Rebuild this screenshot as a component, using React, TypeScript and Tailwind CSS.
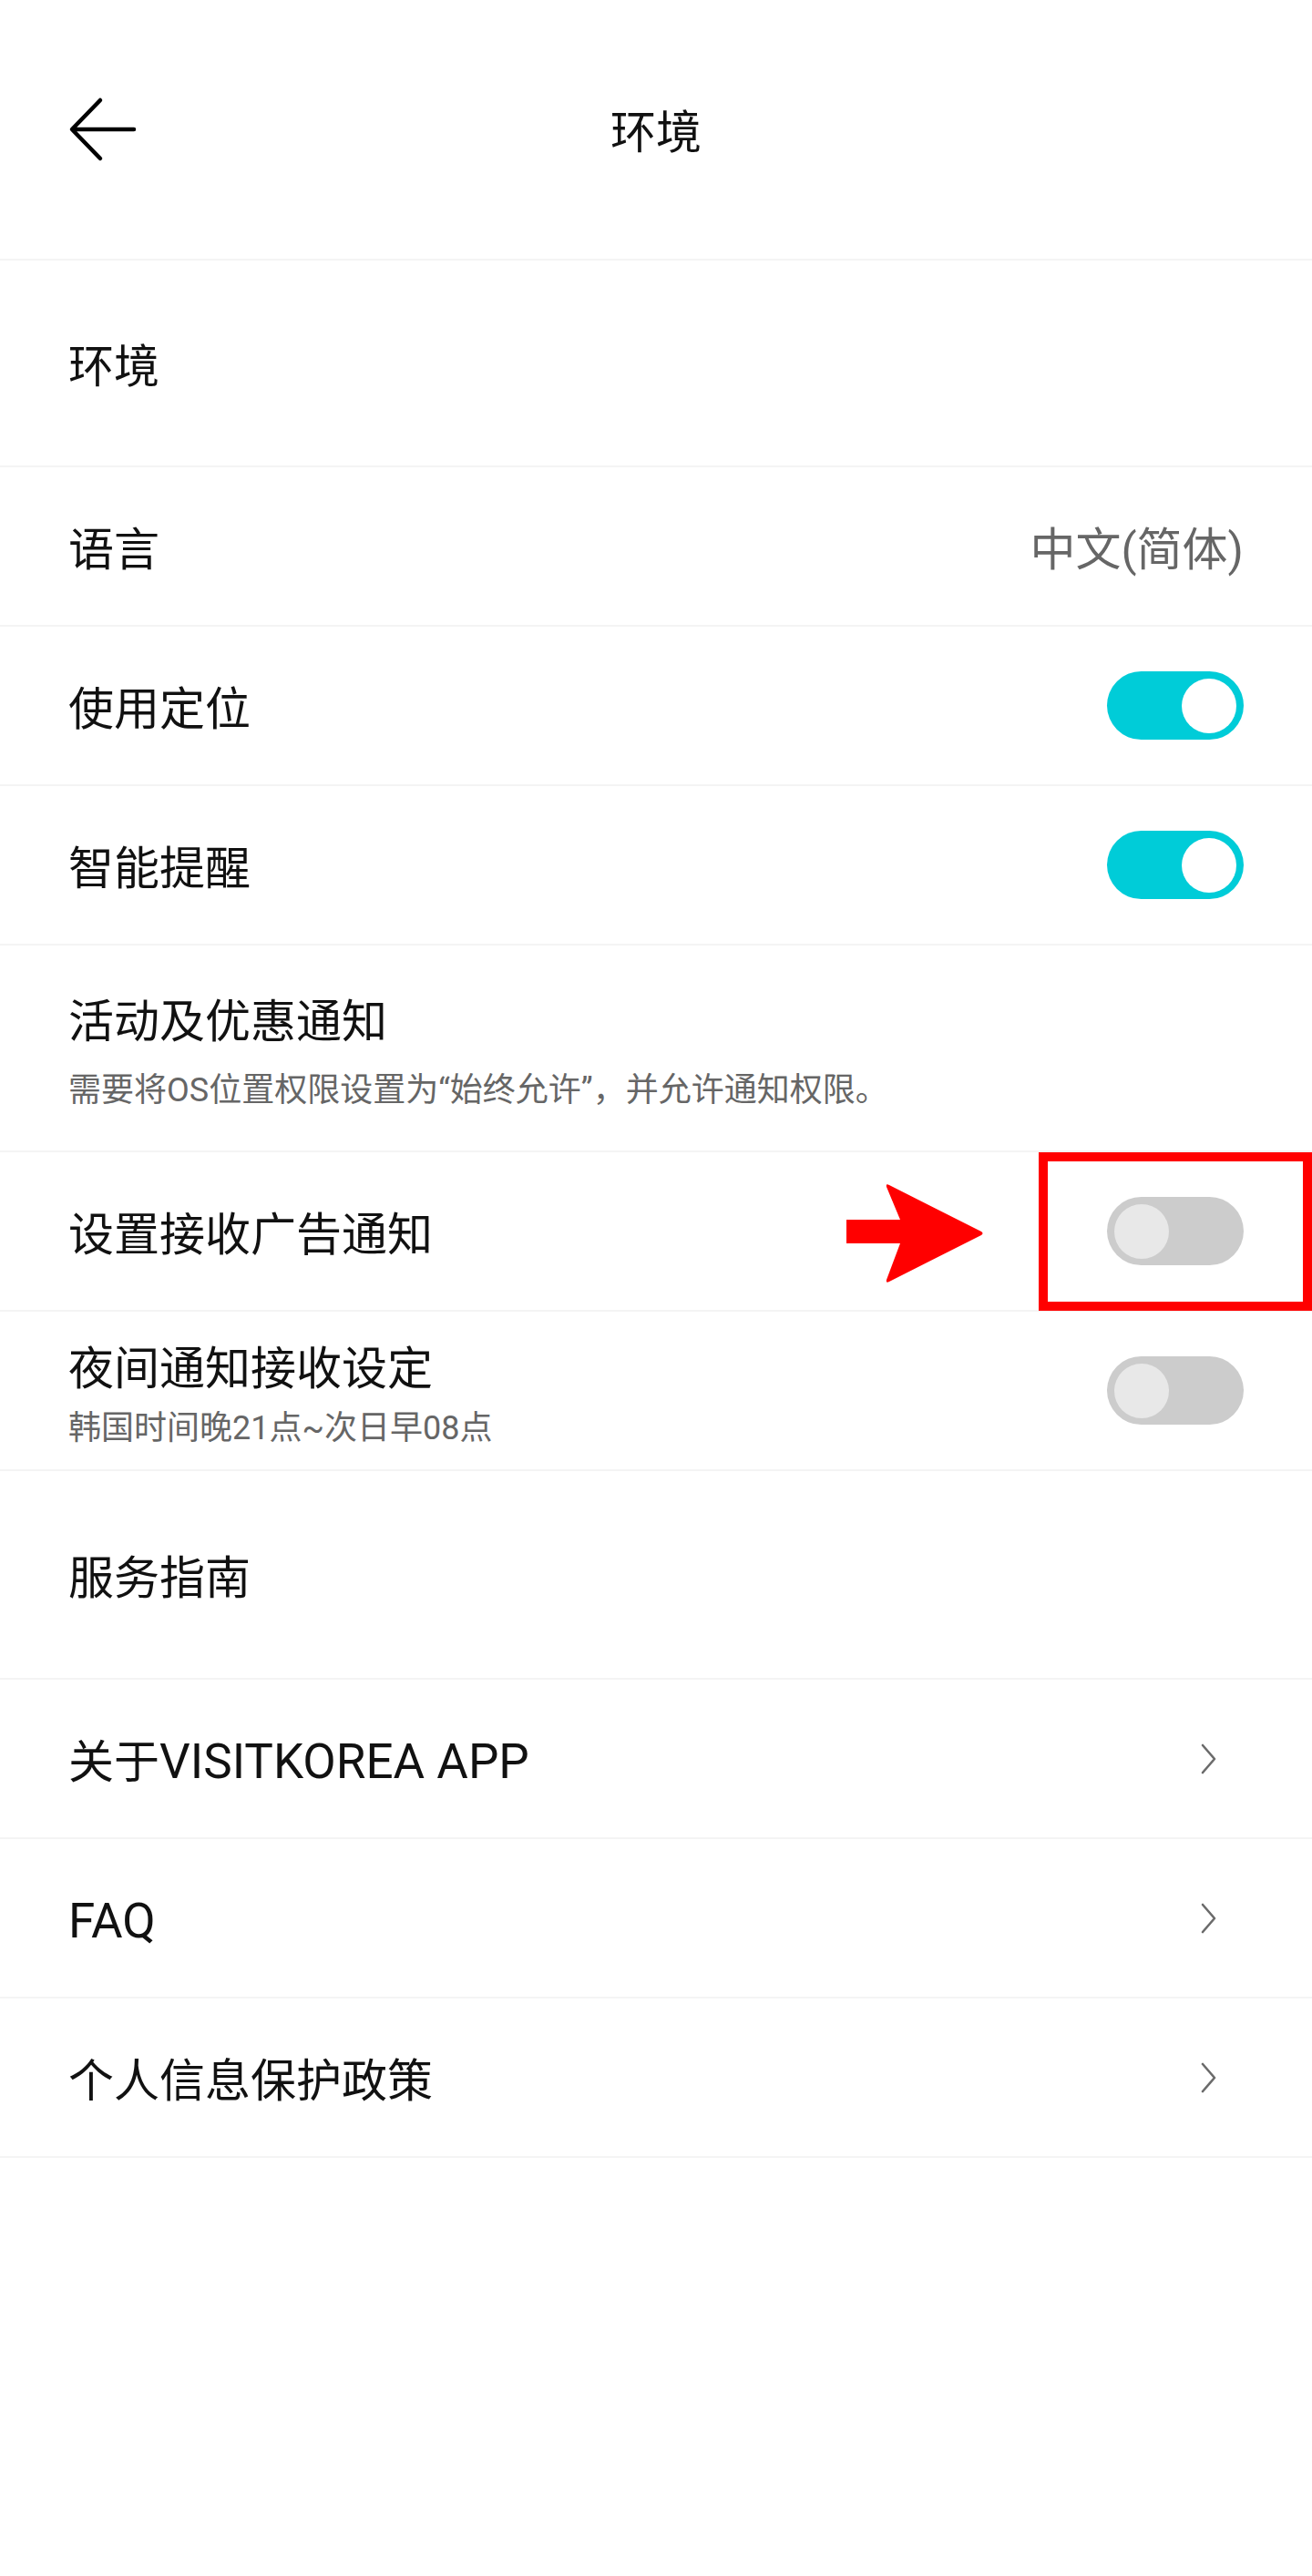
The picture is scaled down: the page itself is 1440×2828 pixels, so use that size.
import React from "react";

const FONT = "font-['Roboto','Noto_Sans_CJK_SC',sans-serif]";

function Toggle({ on }: { on: boolean }) {
  return (
    <div
      className={`flex h-[75px] w-[150px] items-center rounded-full px-[8px] ${
        on ? "justify-end bg-[#00ccd8]" : "justify-start bg-[#cccccc]"
      }`}
    >
      <div
        className={`h-[60px] w-[60px] rounded-full ${
          on ? "bg-white" : "bg-[#e8e8e8]"
        }`}
      />
    </div>
  );
}

function Chevron() {
  return (
    <svg width="22" height="36" viewBox="0 0 22 36" className="block">
      <path
        d="M4 3 L17 18 L4 33"
        fill="none"
        stroke="#6b6b6b"
        strokeWidth="2.6"
        strokeLinecap="round"
        strokeLinejoin="round"
      />
    </svg>
  );
}

function Row({
  label,
  height = "h-[175px]",
  right,
  rightPad = "pr-[75px]",
  children,
}: {
  label: React.ReactNode;
  height?: string;
  right?: React.ReactNode;
  rightPad?: string;
  children?: React.ReactNode;
}) {
  return (
    <div
      className={`relative flex ${height} items-center justify-between border-b-2 border-[#f4f4f4] pl-[75px] ${rightPad}`}
    >
      <span className="pt-[8px] text-[50px] leading-none text-[#111111]">
        {label}
      </span>
      {right}
      {children}
    </div>
  );
}

function SubRow({
  label,
  sub,
  height,
  gap,
  right,
}: {
  label: string;
  sub: string;
  height: string;
  gap: string;
  right?: React.ReactNode;
}) {
  return (
    <div
      className={`flex ${height} items-center justify-between border-b-2 border-[#f4f4f4] pl-[75px] pr-[75px]`}
    >
      <div className="flex flex-col pt-[10px]">
        <span className="text-[50px] leading-none text-[#111111]">{label}</span>
        <span className={`${gap} text-[36px] leading-none text-[#666666]`}>
          {sub}
        </span>
      </div>
      {right}
    </div>
  );
}

export default function App() {
  return (
    <div className={`min-h-[2828px] w-[1440px] bg-white ${FONT}`}>
      <header className="relative flex h-[286px] items-center justify-center border-b-2 border-[#f4f4f4]">
        <svg
          width="80"
          height="76"
          viewBox="0 0 80 76"
          className="absolute left-[72px] top-[104px]"
        >
          <path
            d="M75 38 H8 M38 6 L7 38 L38 70"
            fill="none"
            stroke="#000"
            strokeWidth="4.5"
            strokeLinecap="round"
            strokeLinejoin="round"
          />
        </svg>
        <h1 className="pt-[8px] text-[50px] font-normal leading-none text-[#111111]">
          环境
        </h1>
      </header>

      <Row label="环境" height="h-[227px]" />
      <Row
        label="语言"
        right={
          <span className="pt-[8px] text-[50px] leading-none text-[#666666]">
            中文(简体)
          </span>
        }
      />
      <Row label="使用定位" right={<Toggle on />} />
      <Row label="智能提醒" right={<Toggle on />} />
      <SubRow
        label="活动及优惠通知"
        sub="需要将OS位置权限设置为“始终允许”，并允许通知权限。"
        height="h-[227px]"
        gap="mt-[32px]"
      />
      <Row label="设置接收广告通知" right={<Toggle on={false} />}>
        <svg
          width="152"
          height="110"
          viewBox="0 0 152 110"
          className="absolute left-[927px] top-[34px]"
        >
          <path
            d="M2 40 H61 L46 4 Q45 0 49 2 L150 53 Q153 55 150 57 L49 108 Q45 110 46 106 L61 66 H2 Z"
            fill="#ff0000"
          />
        </svg>
        <div className="absolute right-0 top-0 -bottom-[1px] w-[300px] border-[10px] border-[#ff0000]" />
      </Row>
      <SubRow
        label="夜间通知接收设定"
        sub="韩国时间晚21点~次日早08点"
        height="h-[175px]"
        gap="mt-[22px]"
        right={<Toggle on={false} />}
      />

      <Row label="服务指南" height="h-[229px]" />
      <Row
        label={
          <>
            关于<span className="text-[53px]">VISITKOREA APP</span>
          </>
        }
        rightPad="pr-[102px]"
        right={<Chevron />}
      />
      <Row
        label={<span className="text-[53px]">FAQ</span>}
        rightPad="pr-[102px]"
        right={<Chevron />}
      />
      <Row label="个人信息保护政策" rightPad="pr-[102px]" right={<Chevron />} />
    </div>
  );
}
